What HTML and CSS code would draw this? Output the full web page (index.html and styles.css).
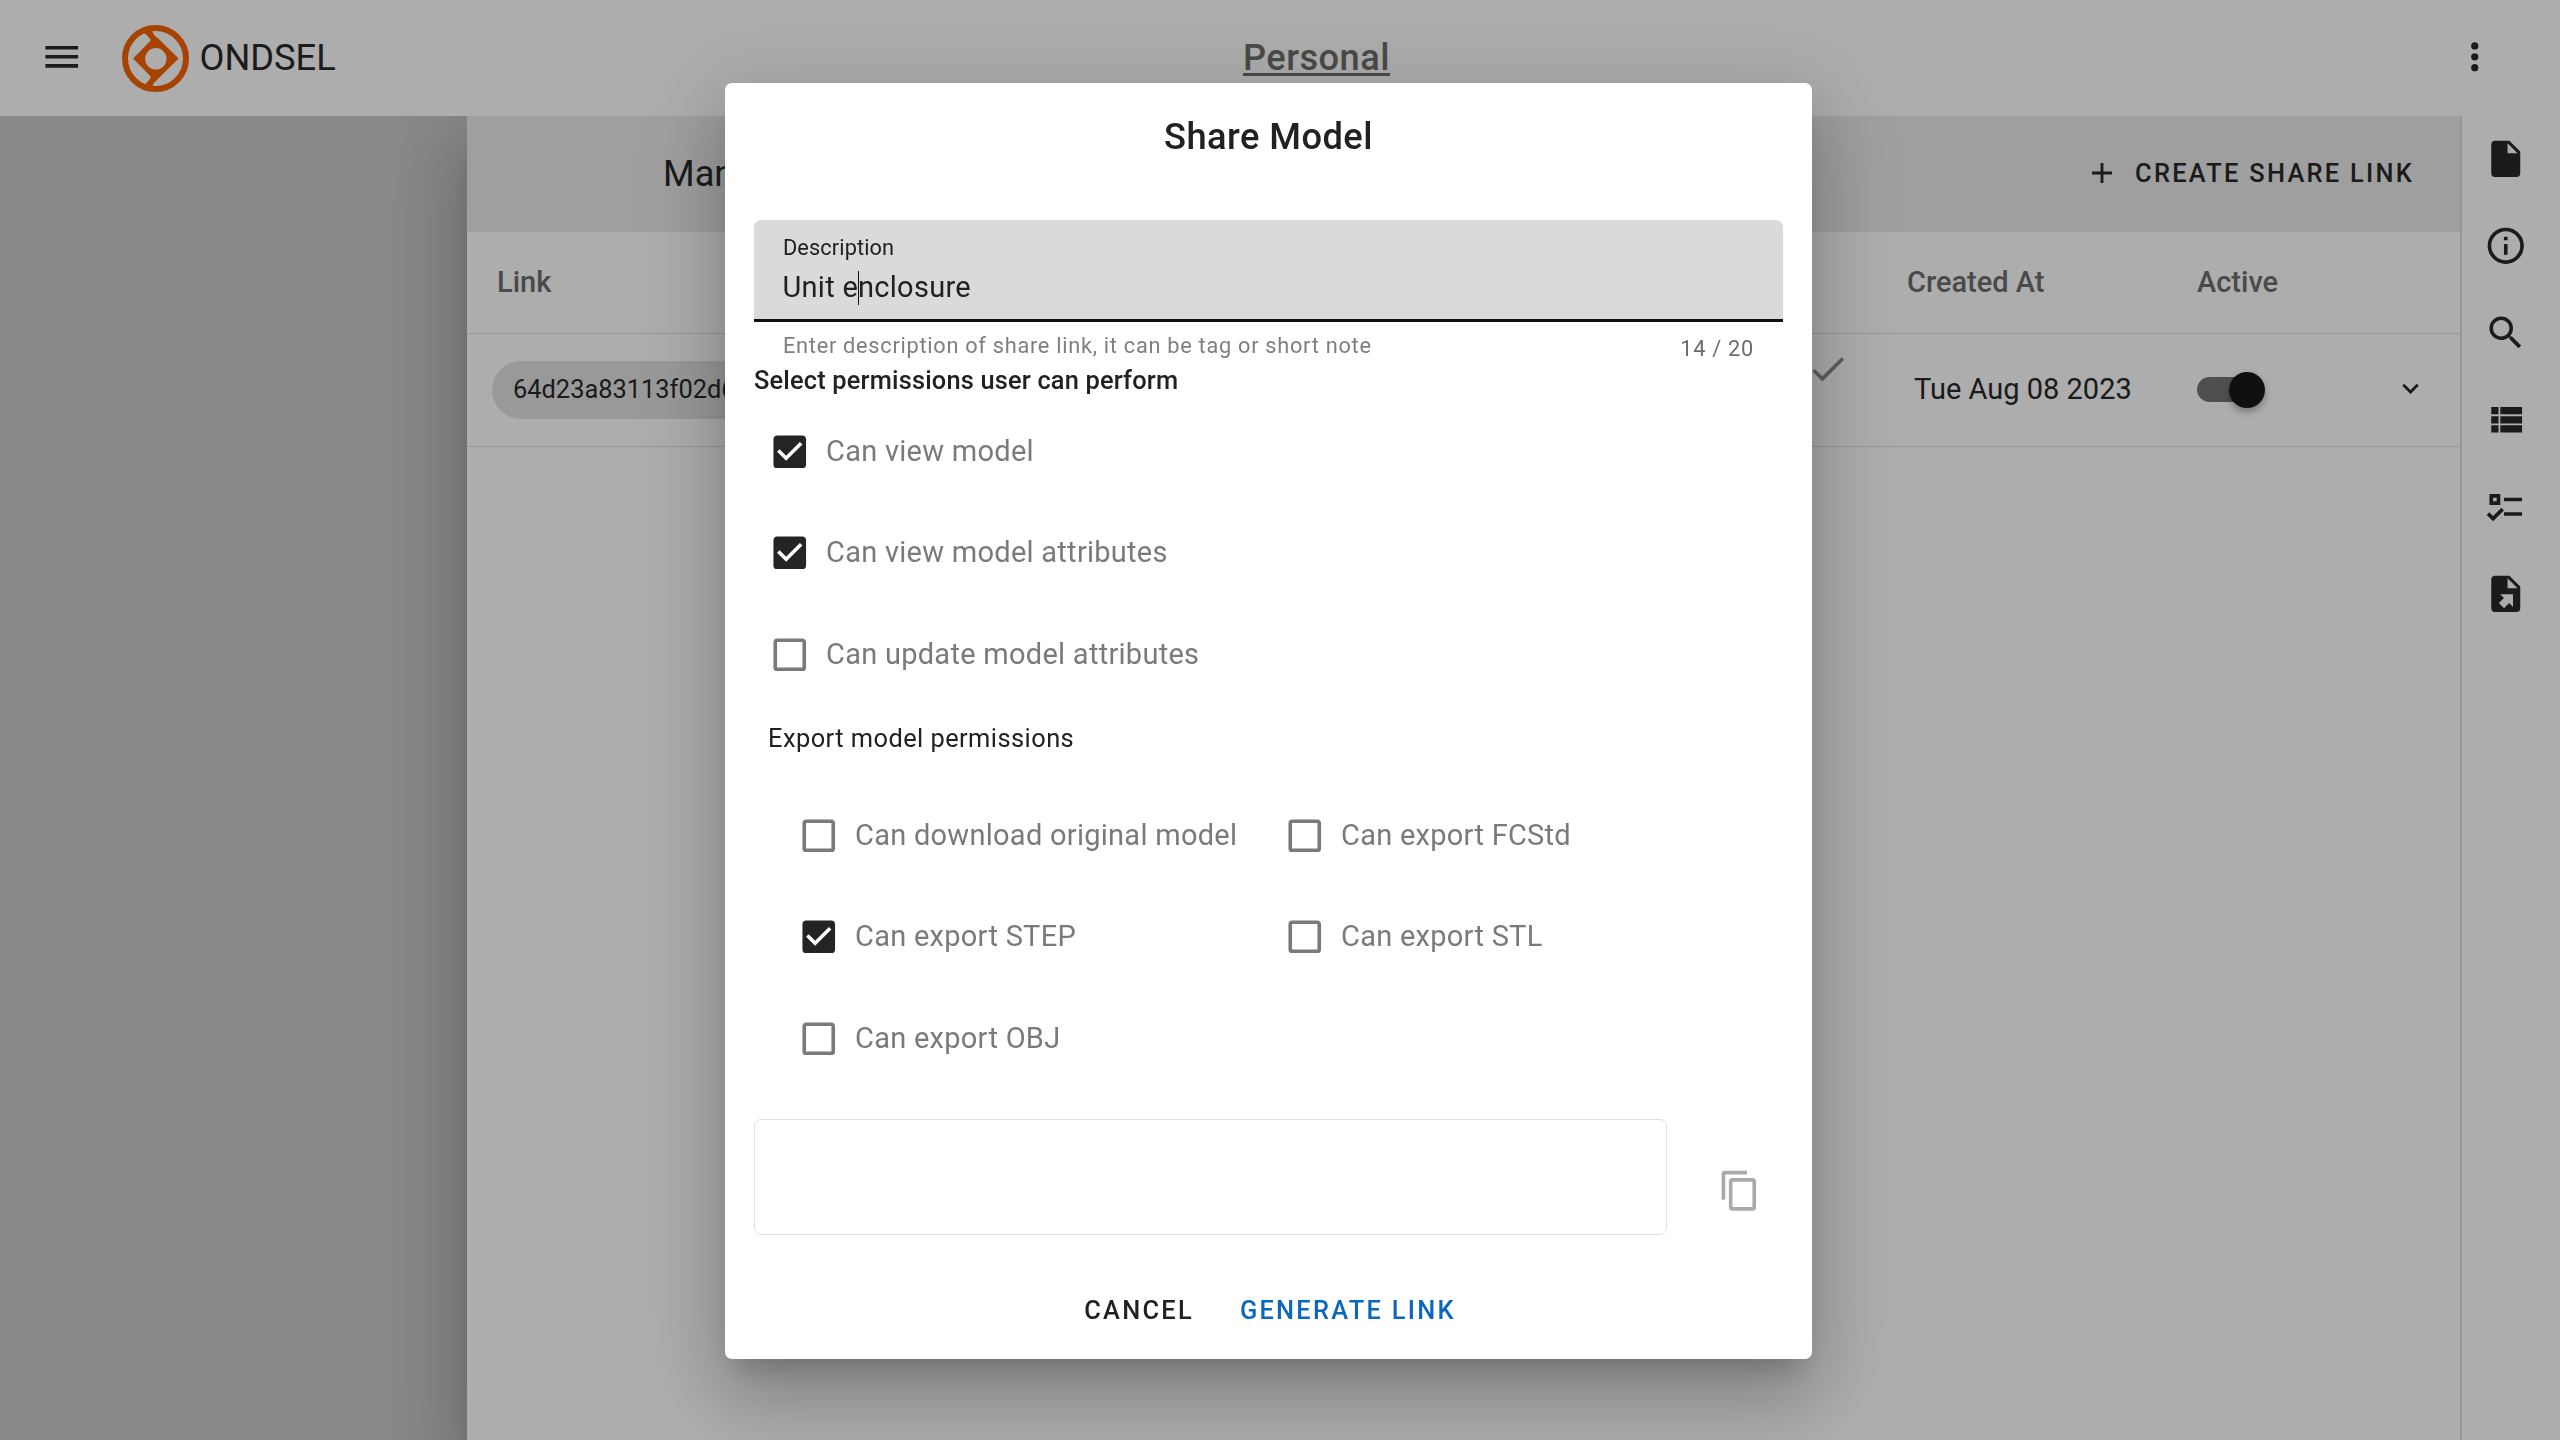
FILE: index.html
```html
<!DOCTYPE html>
<html lang="en">
<head>
<meta charset="utf-8">
<title>Ondsel</title>
<link rel="stylesheet" href="styles.css">
</head>
<body>
<svg class="defs" aria-hidden="true">
  <symbol id="menu" viewBox="0 0 24 24"><path d="M3,6H21V8H3V6M3,11H21V13H3V11M3,16H21V18H3V16Z"/></symbol>
  <symbol id="dots" viewBox="0 0 24 24"><path d="M12,16A2,2 0 0,1 14,18A2,2 0 0,1 12,20A2,2 0 0,1 10,18A2,2 0 0,1 12,16M12,10A2,2 0 0,1 14,12A2,2 0 0,1 12,14A2,2 0 0,1 10,12A2,2 0 0,1 12,10M12,4A2,2 0 0,1 14,6A2,2 0 0,1 12,8A2,2 0 0,1 10,6A2,2 0 0,1 12,4Z"/></symbol>
  <symbol id="plus" viewBox="0 0 24 24"><path d="M19,13H13V19H11V13H5V11H11V5H13V11H19V13Z"/></symbol>
  <symbol id="check" viewBox="0 0 24 24"><path d="M21,7L9,19L3.5,13.5L4.91,12.09L9,16.17L19.59,5.59L21,7Z"/></symbol>
  <symbol id="chevron" viewBox="0 0 24 24"><path d="M7.41,8.58L12,13.17L16.59,8.58L18,10L12,16L6,10L7.41,8.58Z"/></symbol>
  <symbol id="file" viewBox="0 0 24 24"><path d="M13,9V3.5L18.5,9M6,2C4.89,2 4,2.89 4,4V20A2,2 0 0,0 6,22H18A2,2 0 0,0 20,20V8L14,2H6Z"/></symbol>
  <symbol id="info" viewBox="0 0 24 24"><path d="M11,9H13V7H11M12,20C7.59,20 4,16.41 4,12C4,7.59 7.59,4 12,4C16.41,4 20,7.59 20,12C20,16.41 16.41,20 12,20M12,2A10,10 0 0,0 2,12A10,10 0 0,0 12,22A10,10 0 0,0 22,12A10,10 0 0,0 12,2M11,17H13V11H11V17Z"/></symbol>
  <symbol id="magnify" viewBox="0 0 24 24"><path d="M9.5,3A6.5,6.5 0 0,1 16,9.5C16,11.11 15.41,12.59 14.44,13.73L14.71,14H15.5L20.5,19L19,20.5L14,15.5V14.71L13.73,14.44C12.59,15.41 11.11,16 9.5,16A6.5,6.5 0 0,1 3,9.5A6.5,6.5 0 0,1 9.5,3M9.5,5C7,5 5,7 5,9.5C5,12 7,14 9.5,14C12,14 14,12 14,9.5C14,7 12,5 9.5,5Z"/></symbol>
  <symbol id="list" viewBox="0 0 24 24"><path d="M9,5V9H21V5M9,19H21V15H9M9,14H21V10H9M4,9H8V5H4M4,19H8V15H4M4,14H8V10H4V14Z"/></symbol>
  <symbol id="checks" viewBox="0 0 24 24"><path d="M3,5H9V11H3V5M5,7V9H7V7H5M11,7H21V9H11V7M11,15H21V17H11V15M5,20L1.5,16.5L2.91,15.09L5,17.17L9.59,12.59L11,14L5,20Z"/></symbol>
  <symbol id="export" viewBox="0 0 24 24"><path d="M6,2C4.89,2 4,2.9 4,4V20A2,2 0 0,0 6,22H18A2,2 0 0,0 20,20V8L14,2M13,3.5L18.5,9H13M8.93,12.22H16V19.29L13.88,17.17L11.05,20L8.22,17.17L11.05,14.35"/></symbol>
  <symbol id="box-on" viewBox="0 0 24 24"><path d="M10,17L5,12L6.41,10.58L10,14.17L17.59,6.58L19,8M19,3H5C3.89,3 3,3.89 3,5V19A2,2 0 0,0 5,21H19A2,2 0 0,0 21,19V5C21,3.89 20.1,3 19,3Z"/></symbol>
  <symbol id="box-off" viewBox="0 0 24 24"><path d="M19,3H5C3.89,3 3,3.89 3,5V19A2,2 0 0,0 5,21H19A2,2 0 0,0 21,19V5C21,3.89 20.1,3 19,3M19,5V19H5V5H19Z"/></symbol>
  <symbol id="copy" viewBox="0 0 24 24"><path d="M19,21H8V7H19M19,5H8A2,2 0 0,0 6,7V21A2,2 0 0,0 8,23H19A2,2 0 0,0 21,21V7A2,2 0 0,0 19,5M16,1H4A2,2 0 0,0 2,3V17H4V3H16V1Z"/></symbol>
</svg>

<div class="app">
  <header class="bar">
    <div class="bar-left">
      <svg class="icon"><use href="#menu"/></svg>
      <svg class="logo" viewBox="0 0 200 200">
        <circle cx="100" cy="100" r="91" fill="none" stroke="currentColor" stroke-width="18"/>
        <path fill="currentColor" fill-rule="evenodd" d="M66,26L70,14L90,17Q95,34 106,38L169,100L104,164Q93,172 90,184L70,186L70,176Q78,168 85,159Q87,155 83,151L33,100L82,50Q88,45 83,41Q76,31 70,26ZM101,69A32,32 0 1,0 101,133A32,32 0 1,0 101,69Z"/>
      </svg>
      <span class="brand">ONDSEL</span>
    </div>
    <a class="workspace">Personal</a>
    <svg class="icon kebab"><use href="#dots"/></svg>
  </header>
  <div class="body">
    <div class="viewer"></div>
    <main class="panel">
      <div class="toolbar">
        <span class="toolbar-title">Manage share links</span>
        <button class="create"><svg class="icon-plus"><use href="#plus"/></svg>CREATE SHARE LINK</button>
      </div>
      <div class="row head">
        <span>Link</span><span></span><span class="created">Created At</span><span>Active</span><span></span>
      </div>
      <div class="row item">
        <span class="chip">64d23a83113f02d6a1b</span>
        <svg class="icon tick"><use href="#check"/></svg>
        <span class="date">Tue Aug 08 2023</span>
        <span class="switch"><i class="thumb"></i></span>
        <svg class="chevron"><use href="#chevron"/></svg>
      </div>
    </main>
    <nav class="rail">
      <svg class="icon"><use href="#file"/></svg>
      <svg class="icon"><use href="#info"/></svg>
      <svg class="icon"><use href="#magnify"/></svg>
      <svg class="icon"><use href="#list"/></svg>
      <svg class="icon"><use href="#checks"/></svg>
      <svg class="icon"><use href="#export"/></svg>
    </nav>
  </div>
</div>

<div class="scrim"></div>
<section class="dialog">
  <h2 class="title">Share Model</h2>
  <div class="field">
    <label class="label">Description</label>
    <div class="value">Unit e<i class="caret"></i>nclosure</div>
  </div>
  <div class="details"><span>Enter description of share link, it can be tag or short note</span><span class="counter">14 / 20</span></div>
  <h3 class="subtitle">Select permissions user can perform</h3>
  <div class="options">
    <label class="option"><svg class="icon on"><use href="#box-on"/></svg><span>Can view model</span></label>
    <label class="option"><svg class="icon on"><use href="#box-on"/></svg><span>Can view model attributes</span></label>
    <label class="option"><svg class="icon"><use href="#box-off"/></svg><span>Can update model attributes</span></label>
  </div>
  <div class="export-title">Export model permissions</div>
  <div class="exports">
    <label class="option"><svg class="icon"><use href="#box-off"/></svg><span>Can download original model</span></label>
    <label class="option"><svg class="icon"><use href="#box-off"/></svg><span>Can export FCStd</span></label>
    <label class="option"><svg class="icon on"><use href="#box-on"/></svg><span>Can export STEP</span></label>
    <label class="option"><svg class="icon"><use href="#box-off"/></svg><span>Can export STL</span></label>
    <label class="option"><svg class="icon"><use href="#box-off"/></svg><span>Can export OBJ</span></label>
  </div>
  <div class="link-row"><div class="link-box"></div><svg class="icon copy"><use href="#copy"/></svg></div>
  <div class="actions"><button class="btn">CANCEL</button><button class="btn primary">GENERATE LINK</button></div>
</section>
</body>
</html>
```
FILE: styles.css
```css
* { box-sizing: border-box; }
body {
  margin: 0;
  width: 2560px;
  height: 1440px;
  overflow: hidden;
  font-family: Roboto, "Liberation Sans", sans-serif;
  font-size: 29px;
  color: #212121;
  background: #fff;
}
.defs { display: none; }
svg { fill: currentColor; flex: none; display: block; }
button { font: inherit; color: inherit; background: none; border: 0; padding: 0; }
.icon { width: 43.5px; height: 43.5px; }

.app { height: 1440px; display: flex; flex-direction: column; color: #292929; }
.bar {
  height: 116px;
  flex: none;
  display: grid;
  grid-template-columns: 1204px auto 1fr;
  align-items: start;
  position: relative;
  z-index: 1;
  background: #fff;
  padding: 0 63.5px 0 40px;
}
.bar-left { display: flex; align-items: center; height: 114px; }
.logo { width: 67px; height: 67px; margin: 3px 0 0 38px; color: #f76300; }
.brand { margin-left: 11px; font-size: 36.25px; line-height: 115px; }
.workspace {
  font-size: 36.25px;
  font-weight: 500;
  letter-spacing: .45px;
  line-height: 115px;
  color: #6e6e6e;
  margin-left: -1px;
  text-decoration: underline;
  text-decoration-thickness: 3px;
  text-underline-offset: 3px;
}
.kebab { justify-self: end; margin-top: 35px; }

.body { flex: 1; display: flex; }
.viewer { width: 467px; background: #cbcbcb; }
.panel {
  flex: 1;
  background: #fff;
  border-right: 2px solid #dcdcdc;
  box-shadow: 0 20px 27px -13px rgba(0,0,0,.2), 0 43px 69px 5px rgba(0,0,0,.14), 0 16px 83px 14px rgba(0,0,0,.12);
}
.toolbar {
  height: 116px;
  background: #ebebeb;
  display: flex;
  justify-content: space-between;
  align-items: center;
  padding: 0 46px 2px 196px;
}
.toolbar-title { font-size: 36.25px; }
.create { display: flex; align-items: center; font-size: 25.4px; font-weight: 500; letter-spacing: 2.27px; }
.icon-plus { width: 34px; height: 34px; margin-right: 16px; }
.row {
  display: grid;
  grid-template-columns: 1310px 101px 290px 190px 1fr;
  align-items: center;
  padding: 0 0 1px 29px;
  border-bottom: 1.8px solid #e0e0e0;
}
.head { height: 102px; padding-bottom: 2px; font-weight: 500; color: #6e6e6e; }
.head span:first-child { padding-left: 1px; }
.item { height: 113px; }
.chip {
  width: 560px;
  height: 58px;
  margin-left: -4px;
  padding-left: 21px;
  border-radius: 29px;
  background: #e2e2e2;
  font-size: 25.4px;
  line-height: 57px;
}
.tick { color: #8c8c8c; margin: -41px 0 0 0; }
.date { padding: 0 0 2px 7px; }
.switch { width: 65px; height: 25px; border-radius: 13px; background: #757575; display: flex; align-items: center; justify-content: flex-end; }
.thumb { width: 36px; height: 36px; flex: none; margin-right: -3px; border-radius: 50%; background: #181818; box-shadow: 0 4px 7px rgba(0,0,0,.3); }
.chevron { width: 33px; height: 33px; margin: -2px 0 0 7px; }
.rail {
  width: 98px;
  background: #fff;
  display: flex;
  flex-direction: column;
  align-items: center;
  gap: 43.5px;
  padding: 21px 11px 0 0;
  position: relative;
}

.scrim { position: fixed; inset: 0; z-index: 5; background: rgba(0,0,0,.32); }
.dialog {
  position: absolute;
  z-index: 6;
  left: 725px;
  top: 83px;
  width: 1087px;
  height: 1276px;
  padding: 0 29px;
  background: #fff;
  border-radius: 7px;
  box-shadow: 0 20px 27px -13px rgba(0,0,0,.2), 0 43px 69px 5px rgba(0,0,0,.14), 0 16px 83px 14px rgba(0,0,0,.12);
}
.title { margin: 0 0 30px; font-size: 36.25px; font-weight: 500; letter-spacing: .45px; line-height: 107px; text-align: center; }
.field { height: 102px; padding: 15px 29px 0; background: #dadada; border-radius: 7px 7px 0 0; border-bottom: 3.6px solid #111; }
.label { display: block; font-size: 21.75px; letter-spacing: .1px; line-height: 26px; }
.value { letter-spacing: .27px; line-height: 53px; margin-left: -.5px; }
.caret { display: inline-block; width: 1px; height: 34px; margin-right: -1px; background: #111; vertical-align: -8px; }
.details { height: 40px; padding: 0 29px; display: flex; justify-content: space-between; font-size: 21.75px; letter-spacing: .72px; line-height: 47px; color: #7f7f7f; }
.counter { line-height: 53px; color: #6c6c6c; }
.subtitle { margin: 0 0 1.75px; font-size: 25.4px; font-weight: 500; letter-spacing: .18px; line-height: 37px; }
.options { padding-left: 14px; }
.option { display: flex; align-items: center; gap: 14.5px; height: 101.5px; letter-spacing: .27px; color: #7a7a7a; }
.option span { padding-bottom: 2px; }
.option .on { color: #242424; }
.export-title { padding: 1px 0 0 14px; margin-bottom: 13px; font-size: 25.4px; letter-spacing: .45px; line-height: 65.5px; }
.exports { padding-left: 43px; display: grid; grid-template-columns: 486px 1fr; }
.link-row { display: flex; align-items: center; margin-top: 29.75px; }
.link-box { width: 913px; height: 116px; border: 1.8px solid #e0e0e0; border-radius: 7px; }
.copy { margin: 28px 0 0 51px; color: #a9a9a9; }
.actions { display: flex; justify-content: center; gap: 46px; padding: 26px 0 0 3px; }
.btn { font-size: 25.4px; font-weight: 500; letter-spacing: 2.27px; line-height: 98px; }
.primary { color: #0b67bd; }
```
